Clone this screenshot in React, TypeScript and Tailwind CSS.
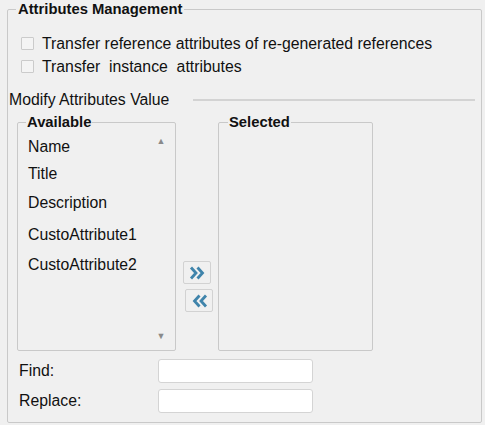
import React from "react";

const available = [
  { label: "Name", top: "mt-[7px]" },
  { label: "Title", top: "mt-[9px]" },
  { label: "Description", top: "mt-[11px]" },
  { label: "CustoAttribute1", top: "mt-[14px]" },
  { label: "CustoAttribute2", top: "mt-[12px]" },
];

function Checkbox() {
  return (
    <span className="inline-block w-[13px] h-[13px] border border-[#cbcbcb] bg-[#f4f4f4] rounded-[1px]" />
  );
}

function DoubleChevron({ dir }: { dir: "right" | "left" }) {
  return (
    <svg
      width="17"
      height="14"
      viewBox="0 0 17 14"
      className={dir === "left" ? "-scale-x-100" : ""}
    >
      <path
        d="M2 1.5 L7 7 L2 12.5 M8.5 1.5 L13.5 7 L8.5 12.5"
        fill="none"
        stroke="#3f84ab"
        strokeWidth="2.8"
        strokeLinejoin="miter"
      />
    </svg>
  );
}

function MoveButton({ dir, shift }: { dir: "right" | "left"; shift: string }) {
  return (
    <button
      className={`w-[28px] h-[23px] flex items-center justify-center border border-[#d2d2d2] rounded-[2px] bg-[#f0f0f0] ${shift}`}
    >
      <DoubleChevron dir={dir} />
    </button>
  );
}

export default function App() {
  return (
    <div className="w-[485px] h-[425px] bg-[#f0f0f0] text-[15.8px] leading-[18px] text-[#111] font-['Liberation_Sans',sans-serif] overflow-hidden">
      <fieldset className="ml-[7px] w-[475px] h-[423px] border border-[#c9c9c9] rounded-[2px]">
        <legend className="ml-[8px] px-[2px] font-bold text-[14.8px]">Attributes Management</legend>

        {/* transfer options */}
        <div className="mt-[14px] ml-[13px] flex flex-col">
          <label className="h-[23px] flex items-center gap-[8px]">
            <Checkbox />
            <span>Transfer reference attributes of re-generated references</span>
          </label>
          <label className="h-[23px] flex items-center gap-[8px]">
            <Checkbox />
            <span>
              Transfer&nbsp; instance&nbsp; attributes
            </span>
          </label>
        </div>

        {/* section header with etched rule */}
        <div className="mt-[13px] ml-[1px] h-[18px] flex items-center">
          <span>Modify Attributes Value</span>
          <div className="ml-auto mr-[6px] w-[282px] h-[2px] bg-[#d3d3d3]" />
        </div>

        <div className="mt-[4px] ml-[9px] flex">
          <fieldset className="w-[159px] h-[238px] border border-[#c9c9c9] rounded-[2px] flex">
            <legend className="ml-[8px] px-[1px] font-bold text-[14.8px]">Available</legend>
            <ul className="flex-1 pl-[10px] flex flex-col">
              {available.map((item) => (
                <li key={item.label} className={item.top}>
                  {item.label}
                </li>
              ))}
            </ul>
            <div className="w-[12px] mr-[8px] mt-[6px] mb-[9px] flex flex-col items-center justify-between text-[#8a8a8a] text-[9px] leading-[9px]">
              <span>▲</span>
              <span>▼</span>
            </div>
          </fieldset>

          <div className="ml-[7px] w-[29px] flex flex-col gap-[5px] pt-[148px]">
            <MoveButton dir="right" shift="" />
            <MoveButton dir="left" shift="ml-[2px]" />
          </div>

          <fieldset className="ml-[6px] w-[155px] h-[238px] border border-[#c9c9c9] rounded-[2px]">
            <legend className="ml-[9px] px-[1px] font-bold text-[14.8px]">Selected</legend>
          </fieldset>
        </div>

        {/* find / replace */}
        <div className="mt-[8px] ml-[11px] flex flex-col gap-[6px]">
          <div className="flex items-center">
            <span className="w-[139px]">Find:</span>
            <input className="w-[155px] h-[24px] bg-white border border-[#d4d4d4] rounded-[3px] outline-none" />
          </div>
          <div className="flex items-center">
            <span className="w-[139px]">Replace:</span>
            <input className="w-[155px] h-[24px] bg-white border border-[#d4d4d4] rounded-[3px] outline-none" />
          </div>
        </div>
      </fieldset>
    </div>
  );
}
